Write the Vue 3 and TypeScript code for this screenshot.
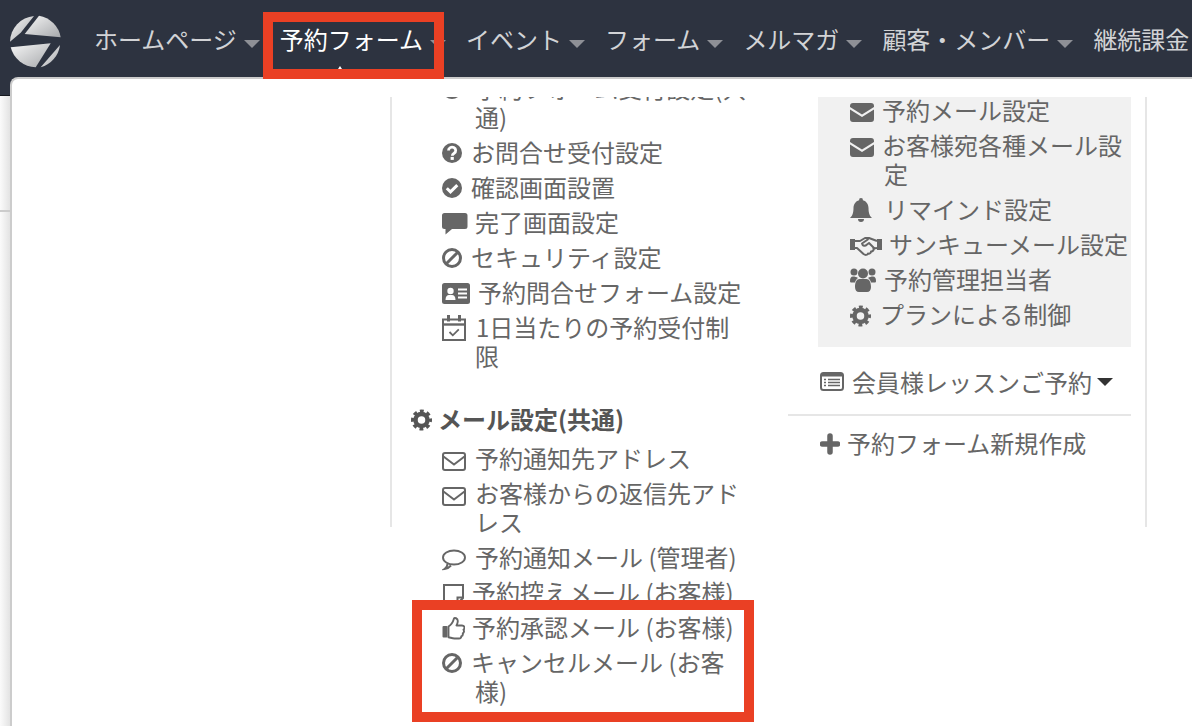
<script setup lang="ts">
interface MenuRow {
  icon: string
  text: string
  gap: number
}

const navItems = [
  { label: 'ホームページ', active: false },
  { label: '予約フォーム', active: true },
  { label: 'イベント', active: false },
  { label: 'フォーム', active: false },
  { label: 'メルマガ', active: false },
  { label: '顧客・メンバー', active: false },
  { label: '継続課金', active: false },
]

// icon widths in px, all icons share a 26px tall box
const iconWidth: Record<string, number> = {
  question: 20,
  check: 20,
  comment: 26,
  ban: 20,
  card: 28,
  calendar: 24,
  'envelope-o': 24,
  'comment-o': 24,
  note: 22,
  thumb: 23,
  envelope: 24,
  bell: 22,
  handshake: 32,
  users: 26,
  cog: 21,
  list: 24,
  plus: 20,
}

const formRows: MenuRow[] = [
  { icon: 'check', text: '予約フォーム受付設定(共通)', gap: 13 },
  { icon: 'question', text: 'お問合せ受付設定', gap: 9 },
  { icon: 'check', text: '確認画面設置', gap: 9 },
  { icon: 'comment', text: '完了画面設定', gap: 7 },
  { icon: 'ban', text: 'セキュリティ設定', gap: 9 },
  { icon: 'card', text: '予約問合せフォーム設定', gap: 8 },
  { icon: 'calendar', text: '1日当たりの予約受付制限', gap: 10 },
]

const mailRows: MenuRow[] = [
  { icon: 'envelope-o', text: '予約通知先アドレス', gap: 9 },
  { icon: 'envelope-o', text: 'お客様からの返信先アドレス', gap: 9 },
  { icon: 'comment-o', text: '予約通知メール (管理者)', gap: 9 },
  { icon: 'note', text: '予約控えメール (お客様)', gap: 8 },
  { icon: 'thumb', text: '予約承認メール (お客様)', gap: 7 },
  { icon: 'ban', text: 'キャンセルメール (お客様)', gap: 9 },
]

const sideRows: MenuRow[] = [
  { icon: 'envelope', text: '予約メール設定', gap: 8 },
  { icon: 'envelope', text: 'お客様宛各種メール設定', gap: 8 },
  { icon: 'bell', text: 'リマインド設定', gap: 12 },
  { icon: 'handshake', text: 'サンキューメール設定', gap: 7 },
  { icon: 'users', text: '予約管理担当者', gap: 8 },
  { icon: 'cog', text: 'プランによる制御', gap: 9 },
]
</script>

<template>
  <div class="page">
    <svg width="0" height="0" class="defs" aria-hidden="true">
      <defs>
        <linearGradient id="logo-grad" x1="0" y1="0" x2="1" y2="1">
          <stop offset="0" stop-color="#f7f7f7" />
          <stop offset="1" stop-color="#a6a8ab" />
        </linearGradient>
        <g id="i-question">
          <circle cx="10" cy="13" r="10" fill="currentColor" />
          <path d="M6.500 10.500a3.600 3.300 0 1 1 5.600 2.700c-1.300.8-1.800 1.200-1.800 2.600" fill="none" stroke="#fff" stroke-width="2.800" />
          <rect x="8.600" y="16.900" width="3.200" height="3" fill="#fff" />
        </g>
        <g id="i-check">
          <circle cx="10" cy="13" r="10" fill="currentColor" />
          <path d="M4.800 13.200l3.700 3.700 6.800-6.800" fill="none" stroke="#fff" stroke-width="3" />
        </g>
        <g id="i-comment">
          <path fill="currentColor" d="M2.500 3h20.500a2.500 2.500 0 0 1 2.500 2.500v11a2.500 2.500 0 0 1-2.500 2.500H10l-6.500 5.500V19h-1A2.500 2.500 0 0 1 0 16.500v-11A2.500 2.500 0 0 1 2.500 3z" />
        </g>
        <g id="i-ban">
          <circle cx="10" cy="13" r="8.500" fill="none" stroke="currentColor" stroke-width="3" />
          <path d="M4 19L16 7" stroke="currentColor" stroke-width="3" />
        </g>
        <g id="i-card">
          <rect x="0" y="3" width="28" height="21" rx="2.500" fill="currentColor" />
          <circle cx="8.500" cy="11" r="3.200" fill="#fff" />
          <path fill="#fff" d="M3.500 20c0-3.300 1.500-5 3.500-5h3c2 0 3.500 1.700 3.500 5z" />
          <path d="M16 9.500h9M16 13.500h9M16 17.500h9" stroke="#fff" stroke-width="2" />
        </g>
        <g id="i-calendar">
          <path fill="none" stroke="currentColor" stroke-width="2" d="M1 4.500h22v20.500H1z" />
          <path d="M1 9.500h22" stroke="currentColor" stroke-width="2.400" />
          <path d="M6.500 0v6.500M17.500 0v6.500" stroke="currentColor" stroke-width="3" />
          <path fill="none" stroke="currentColor" stroke-width="1.800" d="M7.500 17l3.300 3.300 6-6" />
        </g>
        <g id="i-envelope-o">
          <rect x="1" y="7" width="22" height="17" rx="2" fill="none" stroke="currentColor" stroke-width="2" />
          <path d="M1.500 10.500L12 18.500l10.500-8" fill="none" stroke="currentColor" stroke-width="2" />
        </g>
        <g id="i-comment-o">
          <ellipse cx="12" cy="12.500" rx="11" ry="7" fill="none" stroke="currentColor" stroke-width="1.900" />
          <path d="M5.500 18.500c0 2.500-1.500 4.500-3 5.500 2.500-.2 5-1.800 6.500-3.500" fill="none" stroke="currentColor" stroke-width="1.900" />
        </g>
        <g id="i-note">
          <path d="M2 5h19v13l-5.500 5.500H2z" fill="none" stroke="currentColor" stroke-width="2" />
          <path d="M15.500 23v-5.500H21" fill="none" stroke="currentColor" stroke-width="2" />
        </g>
        <g id="i-thumb">
          <path fill="none" stroke="currentColor" stroke-width="1.900" stroke-linejoin="round" d="M6.500 11.500c2.500-1.500 4.500-4.500 5.500-8 .5-1 3.800-.5 3.800 2.500 0 1.500-.5 3-1.300 4.500h5.500c2.800 0 3 3 1.500 4.200.9 1.300.5 3-.7 3.600.3 1.500-.3 2.700-1.600 3.100.2 1.200-.6 2.100-2.200 2.100h-4.500c-2.500 0-4-1-6-1.300z" />
          <rect x="0.500" y="11" width="5" height="11.500" rx="1" fill="currentColor" />
        </g>
        <g id="i-envelope">
          <path fill="currentColor" d="M3 5h18a3 3 0 0 1 3 3v1L12 16.500 0 9V8a3 3 0 0 1 3-3zM0 11.500l12 7.500 12-7.500V21a3 3 0 0 1-3 3H3a3 3 0 0 1-3-3z" />
        </g>
        <g id="i-bell">
          <path fill="currentColor" d="M11 1a2 2 0 0 1 1.900 2.300C16.500 4.200 18.500 7.500 18.500 11c0 6 1.600 8.200 3.500 10H0c1.900-1.800 3.500-4 3.500-10 0-3.500 2-6.800 5.600-7.700A2 2 0 0 1 11 1zM8 22h6a3 3 0 0 1-6 0z" />
        </g>
        <g id="i-handshake">
          <rect x="0" y="7" width="5" height="11" fill="currentColor" />
          <rect x="27" y="7" width="5" height="11" fill="currentColor" />
          <path fill="none" stroke="currentColor" stroke-width="2" stroke-linejoin="round" d="M5 9h5l5-3h4l8 3M5 16h2l6.500 6c2 1.500 4 1 4.500-.5 1.500.5 3-.5 3-2 1.500.2 3-1.200 2.500-3L27 16" />
          <path fill="none" stroke="currentColor" stroke-width="2" stroke-linejoin="round" d="M18.500 7L12 11.500c.5 2.500 3 3 5 1l2-1.500 6 6" />
        </g>
        <g id="i-users">
          <circle cx="13" cy="6.500" r="5" fill="currentColor" />
          <circle cx="4" cy="5" r="3.500" fill="currentColor" />
          <circle cx="22" cy="5" r="3.500" fill="currentColor" />
          <path fill="currentColor" d="M3 9.500c-2 0-3 1.500-3 4.500 0 1 .5 1.500 1.500 1.500h3.500c.5-2 1.500-3.500 3-4.500-1.500-1-3-1.500-5-1.500zM23 9.500c2 0 3 1.500 3 4.500 0 1-.5 1.500-1.500 1.500H21c-.5-2-1.500-3.500-3-4.500 1.500-1 3-1.500 5-1.500zM9.500 12h7c2.800 0 4.500 3 4.500 8 0 3-1.500 5-4 5H9c-2.500 0-4-2-4-5 0-5 1.700-8 4.500-8z" />
        </g>
        <g id="i-cog">
          <circle cx="10.500" cy="14" r="8.400" fill="none" stroke="currentColor" stroke-width="4.200" stroke-dasharray="3.600 3" stroke-dashoffset="1.800" />
          <circle cx="10.500" cy="14" r="6" fill="none" stroke="currentColor" stroke-width="4.500" />
        </g>
        <g id="i-list">
          <rect x="1" y="4" width="22" height="17" rx="2.500" fill="none" stroke="currentColor" stroke-width="2" />
          <rect x="1" y="4" width="22" height="3.500" fill="currentColor" />
          <path d="M4 10.500h2M8 10.500h12M4 13.500h2M8 13.500h12M4 16.500h2M8 16.500h12" stroke="currentColor" stroke-width="1.600" />
        </g>
        <g id="i-plus">
          <path d="M10 6v16M2.500 14h15" stroke="currentColor" stroke-width="5.500" fill="none" stroke-linecap="round" />
        </g>
      </defs>
    </svg>

    <header class="navbar">
      <svg class="logo" viewBox="9 15 54 54" width="54" height="54" aria-hidden="true">
        <g fill="url(#logo-grad)">
          <path d="M10 41.700A26.500 26.500 0 0 1 34 16L20.700 32.700z" />
          <path d="M39 15.700A26.500 26.500 0 0 1 60.700 37.300L24.700 34z" />
          <path d="M10.700 47.300L50.700 43.300L35.700 67.300A26.500 26.500 0 0 1 10.700 47.300z" />
          <path d="M60 45A26.500 26.500 0 0 1 40.700 67.300z" />
        </g>
      </svg>
      <nav class="nav">
        <a v-for="item in navItems" :key="item.label" class="nav-link" :class="{ active: item.active }">
          {{ item.label }}<i class="caret"></i>
        </a>
      </nav>
    </header>

    <div class="backdrop">
      <div class="backdrop-line"></div>
    </div>

    <main class="panel">
      <section class="col-main">
        <div class="menu">
          <div v-for="row in formRows" :key="row.text" class="row">
            <svg class="ico" :width="iconWidth[row.icon]" height="26" :viewBox="`0 0 ${iconWidth[row.icon]} 26`" :style="{ marginRight: row.gap + 'px' }" aria-hidden="true">
              <use :href="'#i-' + row.icon" />
            </svg>{{ row.text }}
          </div>

          <h3 class="group-title">
            <svg class="ico" width="21" height="26" viewBox="0 0 21 26" aria-hidden="true"><use href="#i-cog" /></svg>
            <span>メール設定(共通)</span>
          </h3>

          <div v-for="row in mailRows" :key="row.text" class="row">
            <svg class="ico" :width="iconWidth[row.icon]" height="26" :viewBox="`0 0 ${iconWidth[row.icon]} 26`" :style="{ marginRight: row.gap + 'px' }" aria-hidden="true">
              <use :href="'#i-' + row.icon" />
            </svg>{{ row.text }}
          </div>
        </div>
      </section>

      <aside class="col-side">
        <div class="shade">
          <div v-for="row in sideRows" :key="row.text" class="row">
            <svg class="ico" :width="iconWidth[row.icon]" height="26" :viewBox="`0 0 ${iconWidth[row.icon]} 26`" :style="{ marginRight: row.gap + 'px' }" aria-hidden="true">
              <use :href="'#i-' + row.icon" />
            </svg>{{ row.text }}
          </div>
        </div>
        <div class="lesson">
          <svg class="ico" width="24" height="26" viewBox="0 0 24 26" aria-hidden="true"><use href="#i-list" /></svg>
          <span>会員様レッスンご予約</span><i class="caret dark"></i>
        </div>
        <div class="create">
          <svg class="ico" width="20" height="26" viewBox="0 0 20 26" aria-hidden="true"><use href="#i-plus" /></svg>
          <span>予約フォーム新規作成</span>
        </div>
      </aside>
    </main>

    <div class="arrow"></div>
    <div class="mark mark-nav"></div>
    <div class="mark mark-rows"></div>
  </div>
</template>

<style scoped>
.page {
  position: relative;
  width: 1192px;
  height: 726px;
  overflow: hidden;
  background: #fff;
  color: #666;
  font-family: "Noto Sans CJK JP", "Liberation Sans", sans-serif;
  font-size: 24px;
  line-height: 29px;
}
.defs {
  position: absolute;
}
.navbar {
  display: flex;
  align-items: flex-start;
  height: 96px;
  box-sizing: border-box;
  padding: 15px 0 0 9px;
  background: #2d3340;
  border-bottom: 1px solid #15181f;
}
.logo {
  flex: none;
}
.nav {
  display: flex;
  gap: 20px;
  margin-left: 31px;
  padding-top: 6px;
  white-space: nowrap;
  line-height: 36px;
}
.nav-link {
  color: #d2d3d6;
}
.nav-link.active {
  color: #fff;
}
.caret {
  display: inline-block;
  width: 0;
  height: 0;
  margin-left: 7px;
  vertical-align: 1px;
  border-left: 8px solid transparent;
  border-right: 8px solid transparent;
  border-top: 8px solid #8e9096;
}
.caret.dark {
  margin-left: 5px;
  vertical-align: middle;
  border-top-color: #333;
}
.backdrop {
  height: 630px;
  background: linear-gradient(90deg, #fbfbfb, #e3e3e3 10px);
}
.backdrop-line {
  height: 114px;
  border-bottom: 2px solid #ccc;
}
.panel {
  position: absolute;
  left: 10px;
  top: 77px;
  width: 1182px;
  height: 649px;
  box-sizing: border-box;
  display: flex;
  padding: 18px 0 0 378px;
  background: #fff;
  border-top: 2px solid #ccc;
  border-left: 2px solid #ccc;
  border-radius: 8px 0 0 0;
}
.col-main {
  position: relative;
  width: 398px;
  flex: none;
  overflow: hidden;
}
.col-main::before {
  content: "";
  position: absolute;
  left: 0;
  top: 0;
  width: 2px;
  height: 430px;
  background: #e6e6e6;
}
.menu {
  width: 357px;
  margin: -24px 0 0 2px;
}
.row {
  padding: 0 0 6px 83px;
  text-indent: -33px;
}
.shade .row {
  padding-left: 66px;
  text-indent: -34px;
}
.shade .row:first-child {
  margin-top: -2px;
}
.ico {
  vertical-align: -4px;
}
.group-title {
  display: flex;
  align-items: center;
  gap: 6px;
  margin: 28px 0 10px 19px;
  font-size: 24px;
  line-height: 29px;
  font-weight: 700;
  color: #555;
}
.col-side {
  width: 359px;
  height: 430px;
  flex: none;
  box-sizing: border-box;
  padding-right: 14px;
  border-right: 2px solid #e6e6e6;
}
.shade {
  height: 250px;
  margin-left: 30px;
  overflow: hidden;
  background: #f1f1f1;
}
.lesson {
  display: flex;
  align-items: center;
  margin-top: 20px;
  padding: 0 0 18px 32px;
  border-bottom: 2px solid #e6e6e6;
}
.lesson .ico {
  margin-right: 8px;
}
.create {
  display: flex;
  align-items: center;
  gap: 7px;
  padding: 12px 0 0 32px;
}
.arrow {
  position: absolute;
  left: 332px;
  top: 66px;
  width: 0;
  height: 0;
  border-left: 8px solid transparent;
  border-right: 8px solid transparent;
  border-bottom: 12px solid #fff;
}
.mark {
  position: absolute;
  box-sizing: border-box;
  border: 10px solid #ea4024;
}
.mark-nav {
  left: 263px;
  top: 12px;
  width: 181px;
  height: 67px;
}
.mark-rows {
  left: 412px;
  top: 600px;
  width: 342px;
  height: 122px;
}
</style>

<style>
html,
body {
  margin: 0;
  background: #fff;
}
</style>
